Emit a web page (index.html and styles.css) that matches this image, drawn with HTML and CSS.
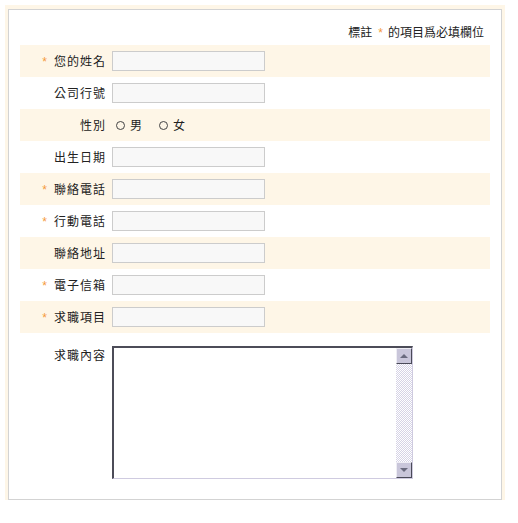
FILE: index.html
```html
<!DOCTYPE html>
<html lang="zh-Hant">
<head>
<meta charset="utf-8">
<title>求職表單</title>
<link rel="stylesheet" href="styles.css">
</head>
<body>
<div class="frame">
  <div class="panel">
    <div class="note">標註<span class="star note-star">*</span>的項目爲必填欄位</div>

    <div class="row alt"><label class="label"><span class="star">*</span>您的姓名</label><input class="field" type="text"></div>
    <div class="row"><label class="label">公司行號</label><input class="field" type="text"></div>
    <div class="row alt"><span class="label">性別</span>
      <div class="radios">
        <span class="opt"><span class="dot"></span>男</span>
        <span class="opt"><span class="dot"></span>女</span>
      </div>
    </div>
    <div class="row"><label class="label">出生日期</label><input class="field" type="text"></div>
    <div class="row alt"><label class="label"><span class="star">*</span>聯絡電話</label><input class="field" type="text"></div>
    <div class="row"><label class="label"><span class="star">*</span>行動電話</label><input class="field" type="text"></div>
    <div class="row alt"><label class="label">聯絡地址</label><input class="field" type="text"></div>
    <div class="row"><label class="label"><span class="star">*</span>電子信箱</label><input class="field" type="text"></div>
    <div class="row alt"><label class="label"><span class="star">*</span>求職項目</label><input class="field" type="text"></div>

    <div class="row-ta">
      <label class="label label-top">求職內容</label>
      <div class="ta">
        <textarea class="ta-input"></textarea>
        <div class="sb">
          <div class="sb-btn"><span class="arrow-up"></span></div>
          <div class="sb-track"></div>
          <div class="sb-btn"><span class="arrow-down"></span></div>
        </div>
      </div>
    </div>
  </div>
</div>
</body>
</html>
```

FILE: styles.css
```css
html, body {
  margin: 0;
  padding: 0;
  background: #ffffff;
}

body {
  font-family: "Noto Sans CJK TC", "Liberation Sans", sans-serif;
  font-size: 12px;
  color: #222222;
}

.frame {
  margin: 5px 0 0 5px;
  width: 500px;
  padding: 4px 3px 0 3px;
  box-sizing: border-box;
  background: #fef6e7;
}

.panel {
  border: 1px solid #d3d3d3;
  background: #ffffff;
  padding: 13px 11px 20px 11px;
}

.note {
  text-align: right;
  line-height: 18px;
  height: 18px;
  padding-right: 6px;
  margin-bottom: 4px;
}

.star {
  font-family: "Liberation Sans", sans-serif;
  font-size: 12px;
  color: #f59a3c;
  letter-spacing: 0;
  margin-right: 7px;
}

.note-star {
  margin-left: 6px;
  margin-right: 5px;
}

.row {
  display: flex;
  align-items: center;
  height: 32px;
}

.row.alt {
  background: #fef6e7;
}

.label {
  width: 92px;
  flex: none;
  box-sizing: border-box;
  text-align: right;
  padding-right: 6px;
  letter-spacing: 1px;
  line-height: 18px;
}

.field {
  width: 153px;
  height: 20px;
  box-sizing: border-box;
  margin: 0;
  padding: 0 3px;
  border: 1px solid #cccccc;
  background: #f8f8f8;
  font: inherit;
  outline: none;
}

.radios {
  display: flex;
  align-items: center;
  line-height: 18px;
}

.opt {
  display: flex;
  align-items: center;
}

.opt + .opt {
  margin-left: 13px;
}

.dot {
  width: 9px;
  height: 9px;
  box-sizing: border-box;
  border: 1.5px solid #444444;
  border-radius: 50%;
  margin-left: 4px;
  margin-right: 5px;
}

.row-ta {
  display: flex;
  align-items: flex-start;
  padding-top: 13px;
}

.ta {
  display: flex;
  width: 301px;
  height: 133px;
  box-sizing: border-box;
  border-top: 2px solid #4c4c58;
  border-left: 2px solid #4c4c58;
  border-right: 1px solid #cfcbe0;
  border-bottom: 1px solid #cfcbe0;
  background: #ffffff;
}

.ta-input {
  flex: 1;
  min-width: 0;
  margin: 0;
  padding: 2px;
  border: 0;
  outline: none;
  resize: none;
  overflow: hidden;
  font: inherit;
  background: #ffffff;
}

.sb {
  width: 16px;
  flex: none;
  display: flex;
  flex-direction: column;
}

.sb-btn {
  height: 16px;
  box-sizing: border-box;
  background: #c9c6da;
  border-top: 1px solid #eeedf4;
  border-left: 1px solid #eeedf4;
  border-right: 1px solid #4a4a58;
  border-bottom: 1px solid #4a4a58;
  display: flex;
  align-items: center;
  justify-content: center;
}

.sb-track {
  flex: 1;
  background-color: #ffffff;
  background-image: repeating-conic-gradient(#d6d3e6 0 25%, #ffffff 0 50%);
  background-size: 2px 2px;
}

.arrow-up {
  width: 0;
  height: 0;
  border-left: 4px solid transparent;
  border-right: 4px solid transparent;
  border-bottom: 4px solid #6a6a7e;
}

.arrow-down {
  width: 0;
  height: 0;
  border-left: 4px solid transparent;
  border-right: 4px solid transparent;
  border-top: 4px solid #6a6a7e;
}
```
